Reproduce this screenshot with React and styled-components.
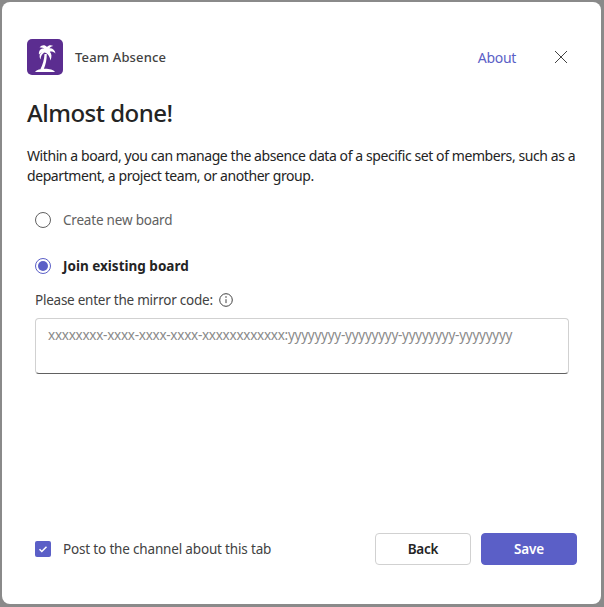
import React from 'react';
import styled, { createGlobalStyle } from 'styled-components';

const GlobalStyle = createGlobalStyle`
  html, body {
    margin: 0;
    height: 100%;
    background: #8a8a8a;
  }
  body {
    font-family: 'Noto Sans', 'Open Sans', sans-serif;
    color: #242424;
  }
`;

const Backdrop = styled.div`
  width: 604px;
  height: 607px;
  padding: 2px 3px 3px 2px;
  box-sizing: border-box;
  overflow: hidden;
`;

const Dialog = styled.div`
  height: 100%;
  box-sizing: border-box;
  background: #fff;
  border-radius: 8px;
  padding: 37px 24px 39px 25px;
  display: flex;
  flex-direction: column;
`;

const Header = styled.div`
  display: flex;
  align-items: center;
  height: 36px;
`;

const AppIcon = styled.div`
  width: 36px;
  height: 36px;
  border-radius: 5px;
  background: #5b2d90;
  display: flex;
`;

const AppName = styled.div`
  margin-left: 12px;
  font-size: 13px;
  font-weight: 500;
  letter-spacing: 0.15px;
  color: #424242;
  flex: 1;
`;

const AboutLink = styled.a`
  font-size: 14px;
  letter-spacing: -0.3px;
  color: #5b5fc7;
  margin-right: 38px;
`;

const CloseButton = styled.button`
  width: 14px;
  height: 14px;
  margin-right: 9px;
  padding: 0;
  border: 0;
  background: none;
  display: flex;
`;

const Title = styled.h1`
  margin: 20px 0 0;
  font-size: 24px;
  line-height: 36px;
  font-weight: 500;
  letter-spacing: -0.5px;
  color: #242424;
`;

const Description = styled.p`
  margin: 15px 0 0;
  font-size: 14px;
  line-height: 20px;
  letter-spacing: -0.42px;
  color: #242424;
`;

const Form = styled.div`
  padding-left: 8px;
  margin-top: 24px;
  display: flex;
  flex-direction: column;
`;

const RadioRow = styled.label`
  display: flex;
  align-items: center;
  gap: 12px;
  height: 20px;
  margin-bottom: ${(p) => p.$gap}px;
`;

const RadioCircle = styled.span`
  box-sizing: border-box;
  width: 16px;
  height: 16px;
  border-radius: 50%;
  border: 1px solid ${(p) => (p.$checked ? '#5b5fc7' : '#616161')};
  display: flex;
  align-items: center;
  justify-content: center;
  &::after {
    content: '';
    display: ${(p) => (p.$checked ? 'block' : 'none')};
    width: 10px;
    height: 10px;
    border-radius: 50%;
    background: #5b5fc7;
  }
`;

const RadioLabel = styled.span`
  font-size: 13.5px;
  letter-spacing: ${(p) => (p.$checked ? '0' : '-0.2px')};
  font-weight: ${(p) => (p.$checked ? 700 : 400)};
  color: ${(p) => (p.$checked ? '#242424' : '#616161')};
`;

const FieldLabel = styled.div`
  display: flex;
  align-items: center;
  gap: 5px;
  height: 20px;
  font-size: 13.5px;
  letter-spacing: -0.24px;
  color: #424242;
`;

const CodeInput = styled.textarea`
  box-sizing: border-box;
  display: block;
  width: 534px;
  height: 56px;
  margin-top: 8px;
  padding: 6px 12px;
  border: 1px solid #d1d1d1;
  border-bottom-color: #616161;
  border-radius: 4px;
  resize: none;
  outline: none;
  background: #fff;
  font-family: inherit;
  font-size: 13.5px;
  line-height: 20px;
  letter-spacing: -0.26px;
  &::placeholder {
    color: #8a8a8a;
    opacity: 1;
  }
`;

const Footer = styled.div`
  margin-top: auto;
  display: flex;
  align-items: center;
  padding-left: 8px;
`;

const CheckBox = styled.span`
  width: 16px;
  height: 16px;
  border-radius: 2px;
  background: #5b5fc7;
  display: flex;
  align-items: center;
  justify-content: center;
`;

const CheckLabel = styled.span`
  margin-left: 12px;
  flex: 1;
  font-size: 13.5px;
  letter-spacing: -0.17px;
  color: #424242;
`;

const Button = styled.button`
  box-sizing: border-box;
  width: 96px;
  height: 32px;
  margin-left: ${(p) => (p.$primary ? '10px' : '0')};
  border-radius: 4px;
  border: 1px solid ${(p) => (p.$primary ? '#5b5fc7' : '#d1d1d1')};
  background: ${(p) => (p.$primary ? '#5b5fc7' : '#fff')};
  color: ${(p) => (p.$primary ? '#fff' : '#242424')};
  font-family: inherit;
  font-size: 13.5px;
  font-weight: 600;
  letter-spacing: -0.2px;
`;

const PalmIcon = () => (
  <svg width="36" height="36" viewBox="0 0 36 36" fill="#fff">
    {/* trunk */}
    <path d="M17.500 15C17.300 20.500 15.800 25.500 13.300 30.500H16.600C18.800 25.500 19.800 20.500 19.800 15Z" />
    {/* fronds */}
    <path d="M19 14C16.500 12.600 13.800 13 12 15.800 11.300 11.500 14 8.800 17.300 9.600 15.800 8.600 14.200 8.300 12.600 8.600 14.600 5.600 18 5.500 20 8 21.300 6.200 24 5.700 26.300 7 24.600 7.300 23.300 8 22.400 9.300 25.400 9 28 11 28.500 14.500 26.500 12.800 24.500 12.300 22.800 12.800 24.800 14.600 25 18 23.500 21.500 22.800 18 21.500 15.500 19 14Z" />
    <path d="M17.800 13.600C15.300 14.600 13.700 16.800 13.600 20.500 11.800 17.500 12.600 14.500 15.500 12.800Z" />
    {/* island */}
    <path d="M8 33C9.500 30.800 13.500 29.800 18 29.800S26.500 30.800 28 33Z" />
  </svg>
);

const CloseIcon = () => (
  <svg width="14" height="14" viewBox="0 0 14 14" fill="none" stroke="#424242" strokeWidth="1">
    <path d="M1 1l12 12M13 1L1 13" />
  </svg>
);

const InfoIcon = () => (
  <svg width="16" height="16" viewBox="0 0 16 16" fill="none" stroke="#424242">
    <circle cx="8" cy="8" r="6.300" />
    <path d="M8 7.200v3.900" />
    <circle cx="8" cy="5" r="0.800" fill="#424242" stroke="none" />
  </svg>
);

const CheckIcon = () => (
  <svg width="10" height="10" viewBox="0 0 10 10" fill="none" stroke="#fff" strokeWidth="1.500">
    <path d="M1.500 5.300l2.300 2.200 4.700-4.800" />
  </svg>
);

const App = () => (
  <>
    <GlobalStyle />
    <Backdrop>
      <Dialog>
        <Header>
          <AppIcon>
            <PalmIcon />
          </AppIcon>
          <AppName>Team Absence</AppName>
          <AboutLink>About</AboutLink>
          <CloseButton>
            <CloseIcon />
          </CloseButton>
        </Header>
        <Title>Almost done!</Title>
        <Description>
          Within a board, you can manage the absence data of a specific set of members, such as a
          department, a project team, or another group.
        </Description>
        <Form>
          <RadioRow $gap={26}>
            <RadioCircle />
            <RadioLabel>Create new board</RadioLabel>
          </RadioRow>
          <RadioRow $gap={14}>
            <RadioCircle $checked />
            <RadioLabel $checked>Join existing board</RadioLabel>
          </RadioRow>
          <FieldLabel>
            Please enter the mirror code:
            <InfoIcon />
          </FieldLabel>
          <CodeInput
            readOnly
            placeholder="xxxxxxxx-xxxx-xxxx-xxxx-xxxxxxxxxxxx:yyyyyyyy-yyyyyyyy-yyyyyyyy-yyyyyyyy"
          />
        </Form>
        <Footer>
          <CheckBox>
            <CheckIcon />
          </CheckBox>
          <CheckLabel>Post to the channel about this tab</CheckLabel>
          <Button>Back</Button>
          <Button $primary>Save</Button>
        </Footer>
      </Dialog>
    </Backdrop>
  </>
);

export default App;
